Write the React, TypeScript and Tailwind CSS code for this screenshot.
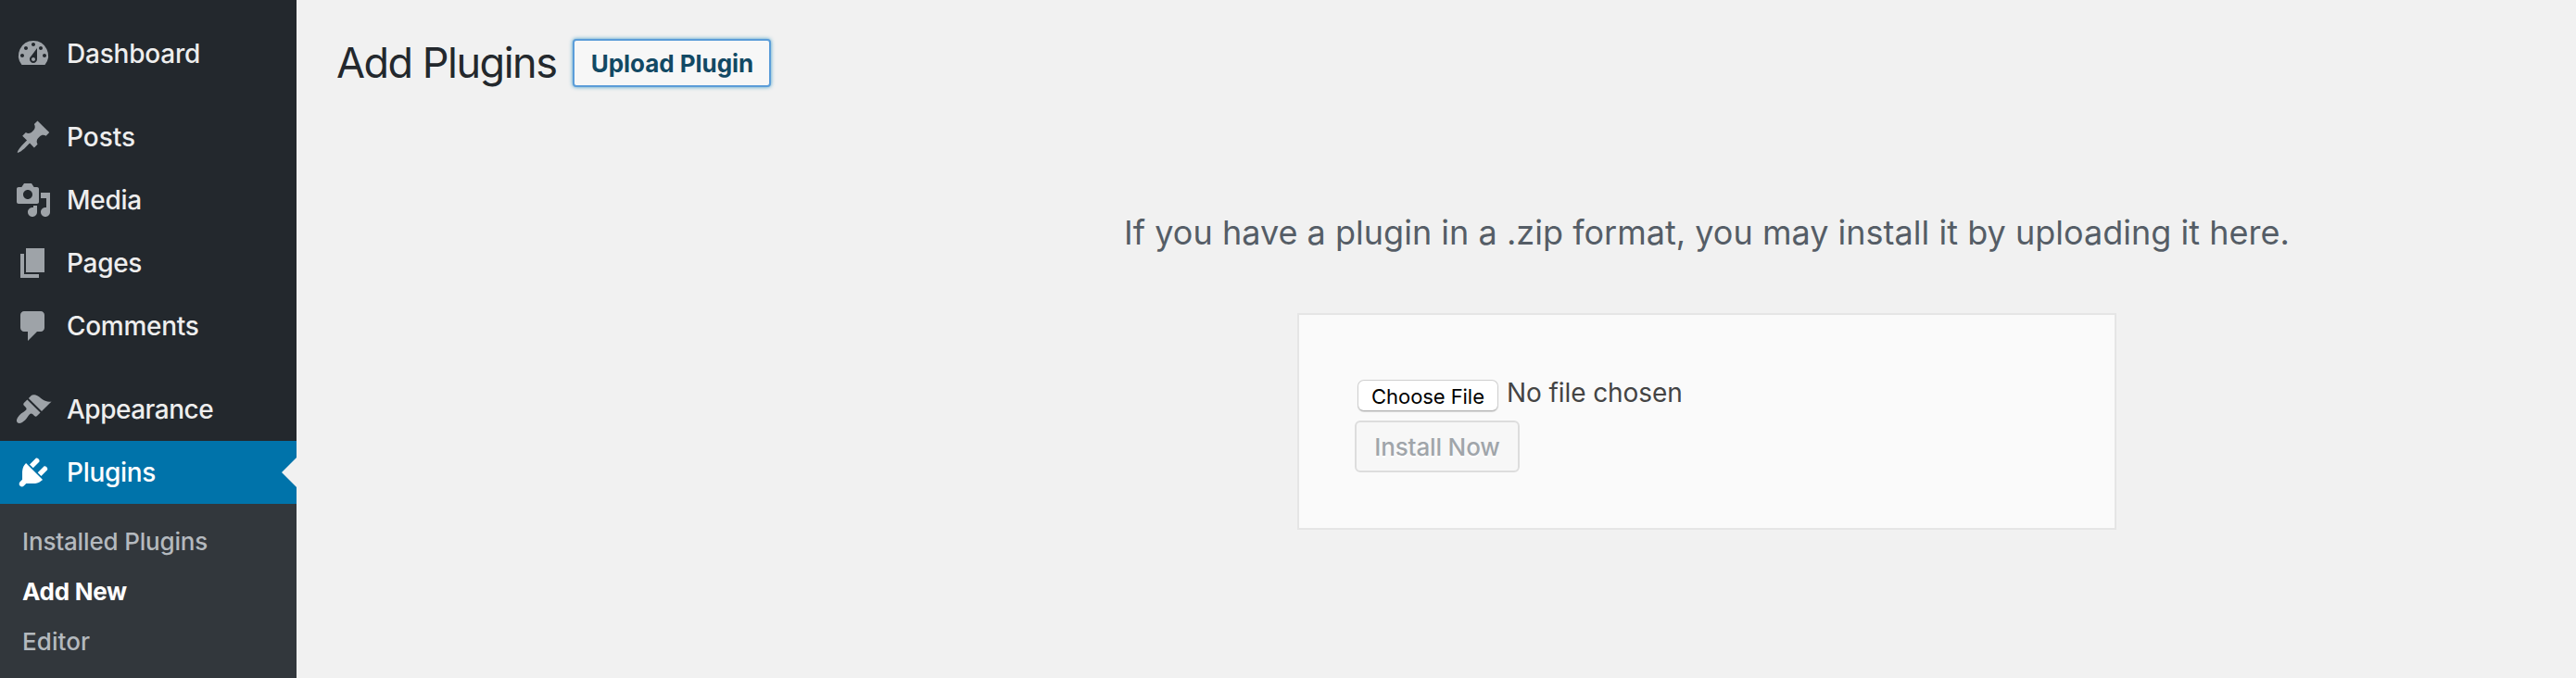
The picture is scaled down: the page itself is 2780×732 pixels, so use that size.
const icons = {
  dashboard:
    'M3.76 16h12.48A7.998 7.998 0 0 0 10 3a7.998 7.998 0 0 0-6.24 13zM10 4c.55 0 1 .45 1 1s-.45 1-1 1-1-.45-1-1 .45-1 1-1zM6 6c.55 0 1 .45 1 1s-.45 1-1 1-1-.45-1-1 .45-1 1-1zm8 0c.55 0 1 .45 1 1s-.45 1-1 1-1-.45-1-1 .45-1 1-1zm-5.37 5.55L12 7v6c0 1.1-.9 2-2 2s-2-.9-2-2c0-.57.24-1.08.63-1.45zM4 10c.55 0 1 .45 1 1s-.45 1-1 1-1-.45-1-1 .45-1 1-1zm12 0c.55 0 1 .45 1 1s-.45 1-1 1-1-.45-1-1 .45-1 1-1zm-5 3c0-.55-.45-1-1-1s-1 .45-1 1 .45 1 1 1 1-.45 1-1z',
  post:
    'M10.44 3.02l1.82-1.82 6.36 6.35-1.83 1.82c-1.05-.68-2.48-.57-3.41.36l-.75.75c-.92.93-1.04 2.35-.35 3.41l-1.83 1.82-2.41-2.41-2.8 2.79c-.42.42-3.38 2.71-3.8 2.29s1.86-3.39 2.28-3.81l2.79-2.79L4.1 9.36l1.83-1.82c1.05.69 2.48.57 3.4-.36l.75-.75c.93-.92 1.05-2.35.36-3.41z',
  media:
    'M13 11V4c0-.55-.45-1-1-1h-1.67L9 1H5L3.67 3H2c-.55 0-1 .45-1 1v7c0 .55.45 1 1 1h10c.55 0 1-.45 1-1zM7 4.5c1.38 0 2.5 1.12 2.5 2.5S8.38 9.5 7 9.5 4.5 8.38 4.5 7 5.62 4.5 7 4.5zM14 6h5v10.5c0 1.38-1.12 2.5-2.5 2.5S14 17.88 14 16.5s1.12-2.5 2.5-2.5c.17 0 .34.02.5.05V9h-3V6zm-4 8.05V13h2v3.5c0 1.38-1.12 2.5-2.5 2.5S7 17.88 7 16.5 8.12 14 9.5 14c.17 0 .34.02.5.05z',
  page: 'M6 15V2h10v13H6zm-1 1h8v2H3V5h2v11z',
  comments: 'M5 2h9c1.1 0 2 .9 2 2v7c0 1.1-.9 2-2 2h-2l-5 5v-5H5c-1.1 0-2-.9-2-2V4c0-1.1.9-2 2-2z',
  appearance:
    'M14.48 11.06L7.41 3.99l1.5-1.5c.5-.56 2.3-.47 3.51.32 1.21.8 1.43 1.28 2.91 2.1 1.18.64 2.45 1.26 4.45.85zm-.71.71L6.7 4.7 4.93 6.47c-.39.39-.39 1.02 0 1.41l1.06 1.06c.39.39.39 1.03 0 1.42-.6.6-1.43 1.11-2.21 1.69-.35.26-.7.53-1.01.84C1.43 14.23.4 16.08 1.4 17.07c.99 1 2.84-.03 4.18-1.36.31-.31.58-.66.85-1.02.57-.78 1.08-1.61 1.69-2.21.39-.39 1.02-.39 1.41 0l1.06 1.06c.39.39 1.02.39 1.41 0z',
  plugins:
    'M13.11 4.36L9.87 7.6 8 5.73l3.24-3.24c.35-.34 1.05-.2 1.56.32.52.51.66 1.21.31 1.55zm-8 1.77l.91-1.12 9.01 9.01-1.19.84c-.71.71-2.63 1.16-3.82 1.16H6.14L4.9 17.26c-.59.59-1.54.59-2.12 0-.59-.58-.59-1.53 0-2.12l1.24-1.24v-3.88c0-1.13.4-3.19 1.09-3.89zm7.26 3.97l3.24-3.24c.34-.35 1.04-.21 1.55.31.52.51.66 1.21.31 1.55l-3.24 3.25z',
};

type MenuItemProps = { icon: keyof typeof icons; label: string; active?: boolean; tracking?: string };

function MenuItem({ icon, label, active, tracking = 'tracking-[-0.3px]' }: MenuItemProps) {
  return (
    <a
      className={`relative flex h-[68px] items-center gap-4 pl-4 text-[28px] font-medium ${tracking} ${
        active ? 'bg-[#0073aa] text-white' : 'text-[#eeeeee]'
      }`}
    >
      <svg viewBox="0 0 20 20" className={`size-10 shrink-0 ${active ? 'fill-white' : 'fill-[#9ea3a8]'}`}>
        <path d={icons[icon]} />
      </svg>
      <span>{label}</span>
      {active && (
        <span className="absolute top-[18px] right-0 border-y-16 border-r-16 border-y-transparent border-r-[#f1f1f1]" />
      )}
    </a>
  );
}

function Sidebar() {
  return (
    <nav className="flex w-80 shrink-0 flex-col bg-[#23282d] pt-6">
      <MenuItem icon="dashboard" label="Dashboard" tracking="tracking-[-0.2px]" />
      <div className="mt-[22px]">
        <MenuItem icon="post" label="Posts" tracking="tracking-normal" />
        <MenuItem icon="media" label="Media" />
        <MenuItem icon="page" label="Pages" />
        <MenuItem icon="comments" label="Comments" />
      </div>
      <div className="mt-[22px]">
        <MenuItem icon="appearance" label="Appearance" tracking="tracking-[-0.5px]" />
        <MenuItem icon="plugins" label="Plugins" active />
      </div>
      <div className="grow bg-[#32373c] pt-3.5 pl-6 text-[26px] leading-[54px] font-medium text-[#b4b9be]">
        <div className="tracking-[-0.17px]">Installed Plugins</div>
        <div className="font-bold tracking-[-0.28px] text-white">Add New</div>
        <div className="tracking-[0.1px]">Editor</div>
      </div>
    </nav>
  );
}

export default function App() {
  return (
    <div className="flex h-[732px] w-[2780px] overflow-hidden bg-[#f1f1f1] font-[Inter,'Liberation_Sans',sans-serif]">
      <Sidebar />
      <main className="flex grow flex-col">
        <header className="flex h-[94px] items-end pl-[43px]">
          <h1 className="w-[255px] text-[45px] leading-[53px] tracking-[-1.5px] whitespace-nowrap text-[#23282d]">
            Add Plugins
          </h1>
          <button className="h-[52px] w-[214px] rounded-[4px] border-2 border-[#5b9dd9] bg-[#f7f7f7] pl-px text-[26px] leading-[49px] font-bold tracking-[-0.05px] whitespace-nowrap text-[#124964] shadow-[0_0_4px_rgba(30,140,190,0.8)]">
            Upload Plugin
          </button>
        </header>
        <section className="flex flex-col items-center pt-[133px] pl-[584px]">
          <p className="text-[36px] leading-[48px] tracking-[0.02px] whitespace-nowrap text-[#555d66]">
            If you have a plugin in a .zip format, you may install it by uploading it here.
          </p>
          <form className="mt-[63px] flex h-[234px] w-[884px] flex-col items-start border-2 border-[#e5e5e5] bg-[#fafafa] px-[60px] pt-[70px]">
            <div className="flex h-11 items-start pl-[3px]">
              <button
                type="button"
                className="h-[34px] w-[152px] rounded-[7px] border border-[#cfcfcf] border-b-[#b5b5b5] bg-white pt-px text-[22px] leading-[32px] tracking-[-0.07px] whitespace-nowrap text-black shadow-[0_1px_1px_rgba(0,0,0,0.14)]"
              >
                Choose File
              </button>
              <span className="ml-[9px] text-[28px] leading-[28px] tracking-[-0.09px] text-[#444444]">No file chosen</span>
            </div>
            <button
              type="button"
              className="h-14 w-[178px] rounded-[6px] border-2 border-[#dddddd] bg-[#f7f7f7] pt-px text-[26px] leading-[52px] font-medium tracking-[-0.15px] whitespace-nowrap text-[#a0a5aa] [text-shadow:0_2px_0_#fff]"
            >
              Install Now
            </button>
          </form>
        </section>
      </main>
    </div>
  );
}
